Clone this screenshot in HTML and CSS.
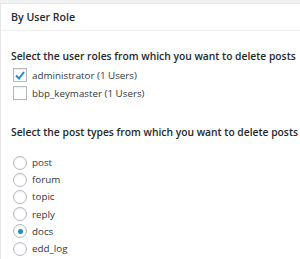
FILE: index.html
```html
<!DOCTYPE html>
<html lang="en">
<head>
  <meta charset="UTF-8">
  <title>Bulk Delete - By User Role</title>
  <meta name="viewport" content="width=device-width, initial-scale=1.0">
  <link rel="stylesheet" href="styles.css">
</head>
<body>
<div class="postbox">
  <h3 class="hndle">By User Role</h3>
  <div class="inside">
    <h4>Select the user roles from which you want to delete posts</h4>
    <ul class="choices">
      <li><span class="cb checked"><svg width="10" height="9" viewBox="0 0 10 9"><path d="M1 4.5 L4 7.5 L9 1" fill="none" stroke="#1e8cbe" stroke-width="2"/></svg></span>administrator (1 Users)</li>
      <li><span class="cb"></span>bbp_keymaster (1 Users)</li>
    </ul>
    <h4 class="types">Select the post types from which you want to delete posts</h4>
    <ul class="choices radios">
      <li><span class="rb"></span>post</li>
      <li><span class="rb"></span>forum</li>
      <li><span class="rb"></span>topic</li>
      <li><span class="rb"></span>reply</li>
      <li><span class="rb checked"></span>docs</li>
      <li><span class="rb"></span>edd_log</li>
      <li><span class="rb"></span>edd_payment</li>
    </ul>
  </div>
</div>
</body>
</html>
```
FILE: styles.css
```css
body { margin: 0; background: #f1f1f1; font-family: "Open Sans", sans-serif; color: #444; overflow: hidden; }
.postbox { margin-top: 3px; background: #fff; border: 1px solid #e5e5e5; border-right: 0; box-shadow: 0 1px 1px rgba(0,0,0,.04); }
.hndle { margin: 0; padding: 6px 10px; font-size: 10.6px; font-weight: 600; line-height: 14px; color: #23282d; border-bottom: 1px solid #eee; }
.inside { padding: 12px 10px 0; }
h4 { margin: 6px 0 3px; font-size: 10.3px; font-weight: 600; color: #23282d; line-height: 14px; white-space: nowrap; }
h4.types { margin-bottom: 15px; }
.choices { list-style: none; margin: 0 0 23px; padding: 0 0 0 2px; }
.choices li { display: flex; align-items: center; height: 18px; font-size: 9.8px; color: #32373c; }
.radios li { height: 17.2px; }
.cb, .rb { width: 12px; height: 12px; border: 1px solid #b4b9be; box-shadow: inset 0 1px 2px rgba(0,0,0,.07); margin-right: 5px; display: flex; align-items: center; justify-content: center; flex-shrink: 0; }
.rb { border-radius: 50%; }
.rb.checked::after { content: ""; width: 5px; height: 5px; border-radius: 50%; background: #1e8cbe; }
```
